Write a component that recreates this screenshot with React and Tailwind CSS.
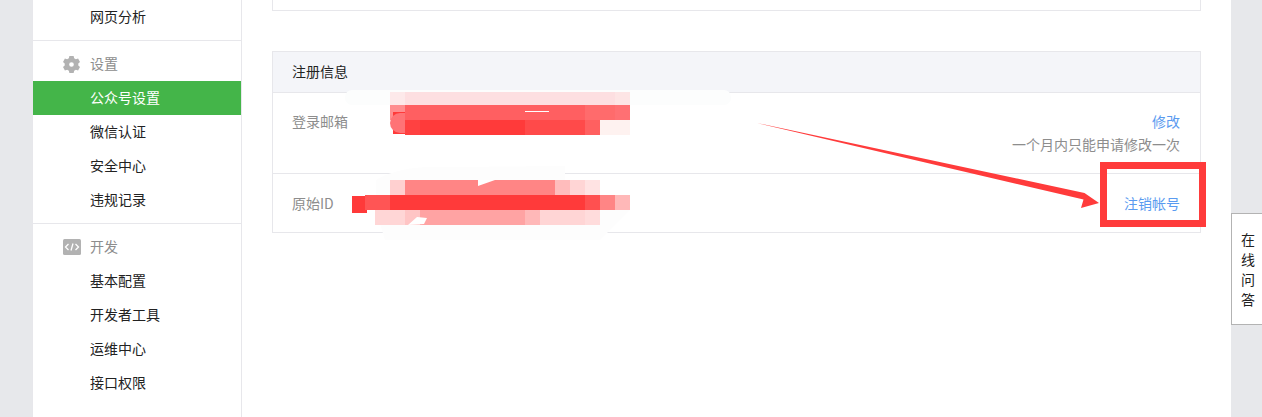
function MenuGroup({ icon, title, items, active, last }) {
    return (
        <div className={last ? 'py-1.5' : 'py-1.5 border-b border-[#e7e7eb]'}>
            {title && (
                <div className="flex items-center h-[34px] pl-[30px] text-[#8d8d8d]">
                    <span className="w-[27px] flex justify-start">{icon}</span>
                    <span className="leading-[32px] h-[34px]">{title}</span>
                </div>
            )}
            {items.map(item => (
                <div
                    key={item}
                    className={item === active
                        ? 'h-[34px] leading-[32px] pl-[57px] bg-[#44b549] text-white'
                        : 'h-[34px] leading-[32px] pl-[57px] text-[#222222]'}
                >
                    {item}
                </div>
            ))}
        </div>
    );
}

function GearIcon() {
    return (
        <svg width="17" height="17" viewBox="1 1 16 16">
            <path
                fillRule="evenodd"
                fill="#b2b2b2"
                d="M7 1h4l.5 2.2 1.6.9 2.1-.7 1.8 3.2-1.6 1.5v1.8l1.6 1.5-1.8 3.2-2.1-.7-1.6.9L11 17H7l-.5-2.2-1.6-.9-2.1.7L1 11.4l1.6-1.5V8.100L1 6.600l1.800-3.200 2.100.7 1.600-.9zM9 6.800a2.200 2.200 0 1 0 0 4.400 2.200 2.200 0 0 0 0-4.400z"
            />
        </svg>
    );
}

function CodeIcon() {
    return (
        <svg width="18" height="16" viewBox="0 0 18 16">
            <rect width="18" height="16" rx="1.5" fill="#b2b2b2" />
            <path d="M5.500 5 2.500 8l3 3M12.500 5l3 3-3 3M10 4.500 8 11.500" fill="none" stroke="#ffffff" strokeWidth="1.300" />
        </svg>
    );
}

// red scribble + mosaic over the two redacted values, arrow and the box round the link
function Annotations() {
    return (
        <svg className="absolute left-0 top-0 pointer-events-none" width="1262" height="417" viewBox="0 0 1262 417">
            <rect x="345" y="90" width="386" height="15" rx="7" fill="#fcfdfd" />
            <rect x="390" y="92" width="15" height="13" fill="#fde9ea" />
            <rect x="405" y="92" width="210" height="13" fill="#fddfe1" />
            <rect x="615" y="92" width="15" height="13" fill="#fde5e5" />
            <rect x="390" y="105" width="15" height="15" fill="#ff8d8f" />
            <rect x="405" y="105" width="180" height="15" fill="#ff5f61" />
            <rect x="585" y="105" width="30" height="15" fill="#ff6b6c" />
            <rect x="615" y="105" width="15" height="15" fill="#ff7073" />
            <rect x="525" y="111" width="24" height="1" fill="#ffffff" />
            <rect x="405" y="120" width="15" height="15" fill="#ff4141" />
            <rect x="420" y="120" width="105" height="15" fill="#ff3a3a" />
            <rect x="525" y="120" width="60" height="15" fill="#ff4a4a" />
            <rect x="585" y="120" width="15" height="15" fill="#ff6060" />
            <rect x="600" y="120" width="30" height="15" fill="#fef2f0" />
            <rect x="393" y="112" width="12" height="22" fill="#ff3a3a" />
            <path d="M405 113H400A10 10 0 0 0 400 133H405z" fill="#ff7376" />

            <path d="M376 180Q400 165 450 167L565 166V180L600 195 630 210 600 240H385L376 210z" fill="#fdfdfd" />
            <rect x="390" y="180" width="15" height="15" fill="#ffd0d0" />
            <rect x="405" y="180" width="150" height="15" fill="#ff8585" />
            <rect x="555" y="180" width="15" height="15" fill="#ffbcbc" />
            <rect x="570" y="180" width="15" height="15" fill="#ffd5d5" />
            <rect x="585" y="180" width="15" height="15" fill="#ffe3e3" />
            <path d="M478 180h52l-35 0-17 6z" fill="#ffffff" />
            <rect x="352" y="196" width="15" height="17" fill="#ff3a3a" />
            <rect x="365" y="195" width="25" height="15" fill="#ff5555" />
            <rect x="390" y="195" width="195" height="15" fill="#ff3a3a" />
            <rect x="585" y="195" width="15" height="15" fill="#ff5050" />
            <rect x="600" y="195" width="15" height="15" fill="#ff8585" />
            <rect x="615" y="195" width="15" height="15" fill="#ffb8b8" />
            <rect x="375" y="210" width="30" height="15" fill="#ffd6d6" />
            <rect x="405" y="210" width="15" height="15" fill="#ffc5c5" />
            <rect x="420" y="210" width="105" height="15" fill="#ffa3a3" />
            <rect x="525" y="210" width="15" height="15" fill="#ffb8b8" />
            <rect x="540" y="210" width="45" height="15" fill="#ffd5d5" />
            <rect x="585" y="210" width="15" height="15" fill="#ffdcdc" />
            <path d="M408 225l9-8 10 1-3 6z" fill="#ffffff" />

            <path d="M757 123 1084.500 193 1099 203 1081 208 1083.500 199.500z" fill="#ff3b3b" />
            <rect x="1103.500" y="165.500" width="99" height="58" fill="none" stroke="#ff3b3b" strokeWidth="7" />
        </svg>
    );
}

export default function App() {
    return (
        <div
            className="relative w-[1262px] h-[417px] overflow-hidden bg-[#e7e8eb] text-sm text-[#222222]"
            style={{ fontFamily: '"Noto Sans CJK SC", "Liberation Sans", sans-serif' }}
        >
            <div className="flex h-full ml-8 w-[1199px] bg-white">
                {/* Sidebar */}
                <div className="w-[210px] shrink-0 border-x border-[#e7e7eb] -mt-1.5">
                    <MenuGroup items={['网页分析']} />
                    <MenuGroup
                        icon={<GearIcon />}
                        title="设置"
                        active="公众号设置"
                        items={['公众号设置', '微信认证', '安全中心', '违规记录']}
                    />
                    <MenuGroup
                        last
                        icon={<CodeIcon />}
                        title="开发"
                        items={['基本配置', '开发者工具', '运维中心', '接口权限']}
                    />
                </div>

                {/* Main */}
                <div className="flex-1 pl-[30px] pr-[30px]">
                    <div className="w-[929px] h-[11px] border border-t-0 border-[#e7e7eb]" />

                    <div className="w-[929px] mt-10 border border-[#e7e7eb]">
                        <div className="h-[41px] leading-[38px] pl-[19px] bg-[#f4f5f9] border-b border-[#e7e7eb]">注册信息</div>
                        <div className="h-[81px] flex justify-between pl-[19px] pr-5 pt-[17px] border-b border-[#e7e7eb]">
                            <span className="text-[#8d8d8d] leading-[22px]">登录邮箱</span>
                            <div className="text-right">
                                <div className="text-[#5a9bf0] leading-[22px]">修改</div>
                                <div className="text-[#8d8d8d] leading-[22px] mt-px">一个月内只能申请修改一次</div>
                            </div>
                        </div>
                        <div className="h-[58px] flex justify-between pl-[19px] pr-5 pt-[18px]">
                            <span className="text-[#8d8d8d] leading-[22px]">原始ID</span>
                            <span className="text-[#5a9bf0] leading-[22px]">注销帐号</span>
                        </div>
                    </div>
                </div>
            </div>

            <Annotations />

            {/* Floating help tab */}
            <div className="absolute left-[1231px] top-[213px] w-[40px] h-[112px] pt-[15px] pl-[9px] bg-white border border-[#b3b3b3] leading-[20px]">
                <div>在</div>
                <div>线</div>
                <div>问</div>
                <div>答</div>
            </div>
        </div>
    );
}
